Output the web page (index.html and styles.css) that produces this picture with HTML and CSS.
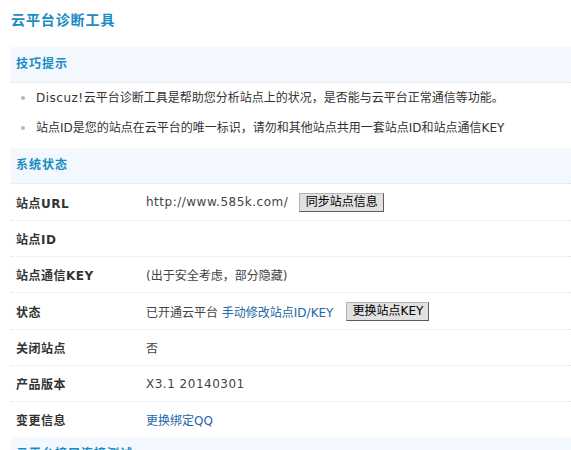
FILE: index.html
```html
<!DOCTYPE html>
<html lang="zh-CN">
<head>
<meta charset="utf-8">
<title>云平台诊断工具</title>
<link rel="stylesheet" href="styles.css">
</head>
<body>
<div class="page">
  <h3 class="title">云平台诊断工具</h3>

  <div class="band">技巧提示</div>
  <ul class="tips">
    <li><span class="en">Discuz!</span>云平台诊断工具是帮助您分析站点上的状况，是否能与云平台正常通信等功能。</li>
    <li>站点ID是您的站点在云平台的唯一标识，请勿和其他站点共用一套站点ID和站点通信KEY</li>
  </ul>

  <div class="band band-gap">系统状态</div>
  <div class="rows">
    <div class="row tall">
      <div class="label">站点URL</div>
      <div class="value"><span class="en">http://www.585k.com/</span><button class="btn btn-sync" type="button">同步站点信息</button></div>
    </div>
    <div class="row">
      <div class="label">站点ID</div>
      <div class="value"></div>
    </div>
    <div class="row">
      <div class="label">站点通信KEY</div>
      <div class="value">(出于安全考虑，部分隐藏)</div>
    </div>
    <div class="row tall">
      <div class="label">状态</div>
      <div class="value">已开通云平台 <a class="link" href="#">手动修改站点ID/KEY</a><button class="btn btn-key" type="button">更换站点KEY</button></div>
    </div>
    <div class="row">
      <div class="label">关闭站点</div>
      <div class="value">否</div>
    </div>
    <div class="row">
      <div class="label">产品版本</div>
      <div class="value"><span class="en">X3.1 20140301</span></div>
    </div>
    <div class="row">
      <div class="label">变更信息</div>
      <div class="value"><a class="link" href="#">更换绑定QQ</a></div>
    </div>
  </div>

  <div class="band">云平台接口连接测试</div>
</div>
</body>
</html>
```

FILE: styles.css
```css
html, body {
  margin: 0;
  padding: 0;
  background: #fff;
  overflow: hidden;
}

body {
  font-family: "DejaVu Sans", "Noto Sans CJK SC", sans-serif;
  font-size: 12px;
  color: #333;
}

.page {
  padding-left: 11px;
}

.title {
  margin: 0;
  padding-top: 10px;
  height: 47px;
  line-height: 20px;
  font-size: 14px;
  font-weight: bold;
  letter-spacing: 0.9px;
  color: #1a8cc4;
  box-sizing: border-box;
}

.band {
  height: 35px;
  line-height: 35px;
  padding-left: 5px;
  background: #f2f8fd;
  border-bottom: 1px dotted #dbe6ef;
  font-weight: bold;
  letter-spacing: 1px;
  color: #1a8cc4;
}

.band-gap {
  margin-top: 5px;
}

.tips {
  list-style: none;
  margin: 0;
  padding: 0;
}

.tips li {
  position: relative;
  height: 30px;
  line-height: 30px;
  padding-left: 25px;
  white-space: nowrap;
}

.tips li::before {
  content: "";
  position: absolute;
  left: 10px;
  top: 13px;
  width: 4px;
  height: 4px;
  border-radius: 50%;
  background: #b8b8b8;
}

.en {
  letter-spacing: 0.5px;
}

.row {
  display: grid;
  grid-template-columns: 130px 1fr;
  align-items: center;
  height: 35px;
  padding-left: 5px;
}

.row.tall {
  height: 36px;
}

.row + .row {
  border-top: 1px dotted #dbe6ef;
}

.label {
  font-weight: bold;
  letter-spacing: 0.5px;
  color: #333;
}

.value {
  display: flex;
  align-items: center;
  white-space: pre;
  color: #444;
}

.link {
  color: #2366a8;
  text-decoration: none;
}

.btn {
  margin-left: 11px;
  height: 19px;
  padding: 0 5px;
  font-family: "DejaVu Sans", "Noto Sans CJK SC", sans-serif;
  font-size: 12px;
  line-height: 17px;
  color: #000;
  background: #e1e1e1;
  border: 1px solid;
  border-color: #b4b4b4 #5c5c5c #5c5c5c #b4b4b4;
  border-radius: 0;
}

.btn-sync {
  width: 85px;
}

.btn-key {
  margin-left: 13px;
  width: 83px;
  padding: 0 3px;
}
```
